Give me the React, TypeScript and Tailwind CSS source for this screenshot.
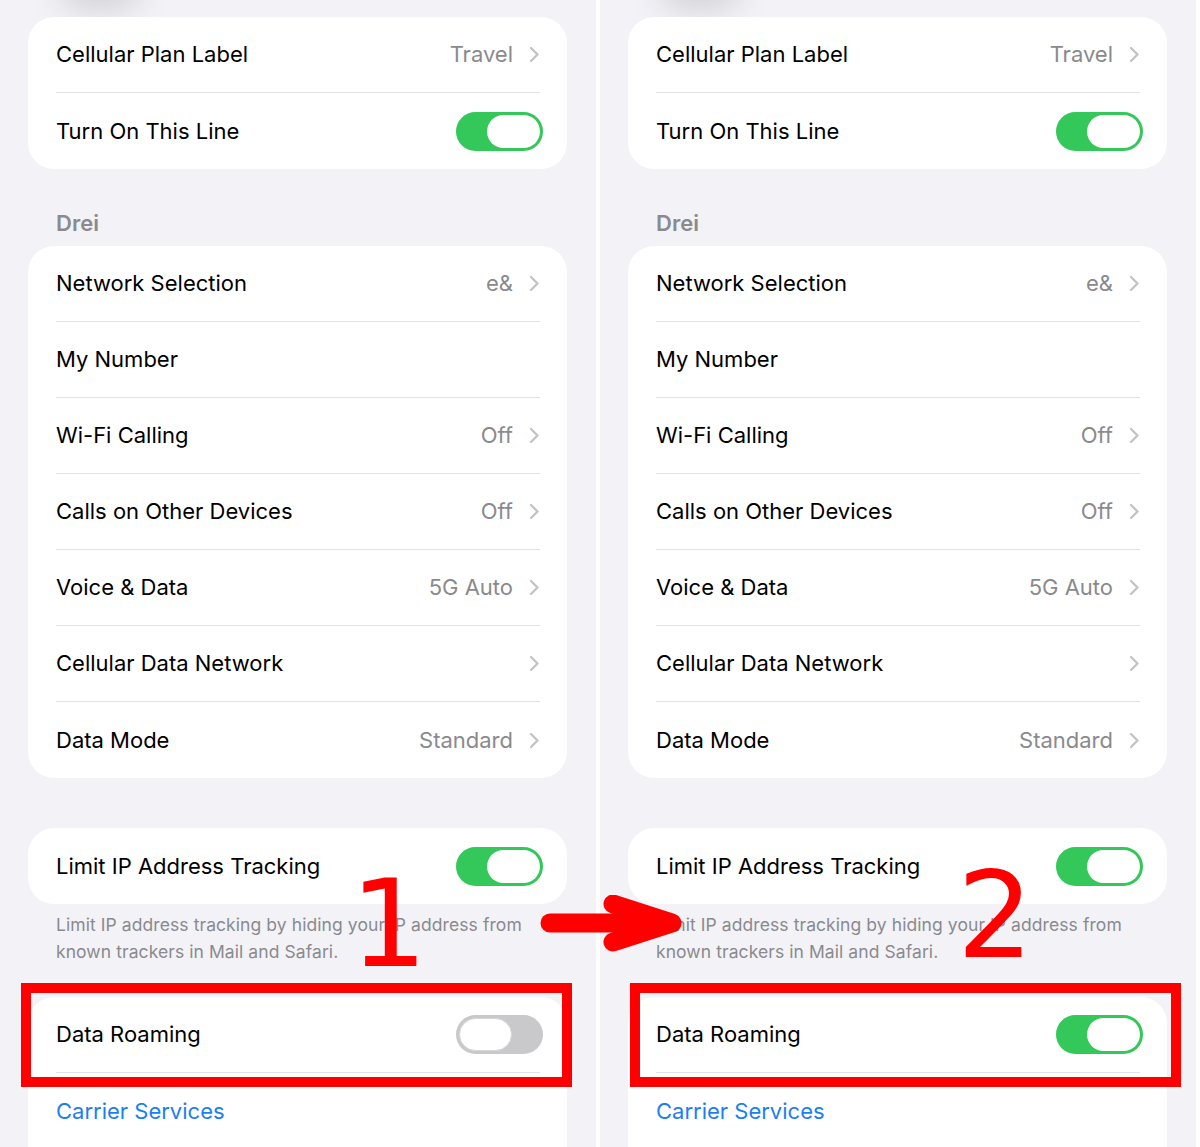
import React from 'react';

type RowProps = {
    label: string;
    value?: string;
    chevron?: boolean;
    toggle?: 'on' | 'off';
    link?: boolean;
    last?: boolean;
};

function Chevron() {
    return (
        <svg width="11" height="17" viewBox="0 0 11 17" className="ml-[16px] shrink-0">
            <polyline points="2,2 8.5,8.5 2,15" fill="none" stroke="#c4c4c7" strokeWidth="2.4" strokeLinecap="round" strokeLinejoin="round" />
        </svg>
    );
}

function Toggle({ on }: { on: boolean }) {
    return (
        <div
            className={
                on
                    ? 'w-[87px] h-[39px] -mr-[3px] rounded-full bg-[#34c759] p-[3px] flex justify-end'
                    : 'w-[87px] h-[39px] -mr-[3px] rounded-full bg-[#c9c9cb] p-[3px] flex justify-start'
            }
        >
            <div
                className={
                    on
                        ? 'w-[53px] h-[33px] rounded-full bg-white'
                        : 'w-[53px] h-[33px] rounded-full bg-white border border-[#d6d6d8]'
                }
            />
        </div>
    );
}

function Row({ label, value, chevron, toggle, link, last }: RowProps) {
    return (
        <div className="pl-[28px] pr-[27px]">
            <div
                className={
                    last
                        ? 'h-[76px] flex items-center'
                        : 'h-[76px] flex items-center border-b border-[#e3e3e6]'
                }
            >
                <span className={link ? 'text-[22px] text-[#1c7ef0]' : 'text-[22px] text-black'}>
                    {label}
                </span>
                <div className="flex-1" />
                {value && <span className="text-[22px] text-[#8a8a8e]">{value}</span>}
                {chevron && <Chevron />}
                {toggle && <Toggle on={toggle === 'on'} />}
            </div>
        </div>
    );
}

function Panel({ roamingOn }: { roamingOn: boolean }) {
    return (
        <div className="relative w-[596px] h-full bg-[#f2f2f7] pl-[28px] pr-[29px] pt-[17px] overflow-hidden">
            <div className="absolute left-[60px] top-[-30px] w-[80px] h-[40px] rounded-full bg-[#d4d4d8] blur-[14px]" />

            <div className="relative bg-white rounded-[26px]">
                <Row label="Cellular Plan Label" value="Travel" chevron />
                <Row label="Turn On This Line" toggle="on" last />
            </div>

            <div className="pt-[40px] pb-[9px] pl-[28px]">
                <div className="text-[22px] leading-[28px] font-semibold text-[#8a8a8e]">Drei</div>
            </div>

            <div className="bg-white rounded-[26px]">
                <Row label="Network Selection" value="e&" chevron />
                <Row label="My Number" />
                <Row label="Wi-Fi Calling" value="Off" chevron />
                <Row label="Calls on Other Devices" value="Off" chevron />
                <Row label="Voice & Data" value="5G Auto" chevron />
                <Row label="Cellular Data Network" chevron />
                <Row label="Data Mode" value="Standard" chevron last />
            </div>

            <div className="mt-[50px] bg-white rounded-[26px]">
                <Row label="Limit IP Address Tracking" toggle="on" last />
            </div>
            <p className="pl-[28px] pr-[10px] pt-[7px] text-[17.5px] leading-[27px] tracking-[0.08px] text-[#8a8a8e]">
                Limit IP address tracking by hiding your IP address from known trackers in Mail and Safari.
            </p>

            <div className="mt-[32px] bg-white rounded-t-[26px]">
                <Row label="Data Roaming" toggle={roamingOn ? 'on' : 'off'} />
                <Row label="Carrier Services" link last />
            </div>
        </div>
    );
}

export default function App() {
    return (
        <div className="relative w-[1200px] h-[1147px] overflow-hidden bg-white flex font-['Inter','Noto_Sans',sans-serif]">
            <Panel roamingOn={false} />
            <div className="w-[4px]" />
            <Panel roamingOn={true} />

            {/* red annotations */}
            <div className="absolute left-[21px] top-[983px] w-[551px] h-[104px] border-[10px] border-[#ff0000]" />
            <div className="absolute left-[630px] top-[983px] w-[551px] h-[104px] border-[10px] border-[#ff0000]" />

            <div className="absolute left-[350px] top-[863px] text-[122px] leading-none text-[#ff0000] font-['DejaVu_Sans',sans-serif]">
                1
            </div>
            <div className="absolute left-[957px] top-[856px] text-[120px] leading-none text-[#ff0000] font-['DejaVu_Sans',sans-serif]">
                2
            </div>

            <svg className="absolute left-[540px] top-[895px]" width="150" height="60" viewBox="0 0 150 60">
                <path d="M 10 28 L 124 28" stroke="#ff0000" strokeWidth="19" strokeLinecap="round" fill="none" />
                <path d="M 73 9 L 132 28 L 73 47" stroke="#ff0000" strokeWidth="19" strokeLinecap="round" strokeLinejoin="round" fill="none" />
            </svg>
        </div>
    );
}
